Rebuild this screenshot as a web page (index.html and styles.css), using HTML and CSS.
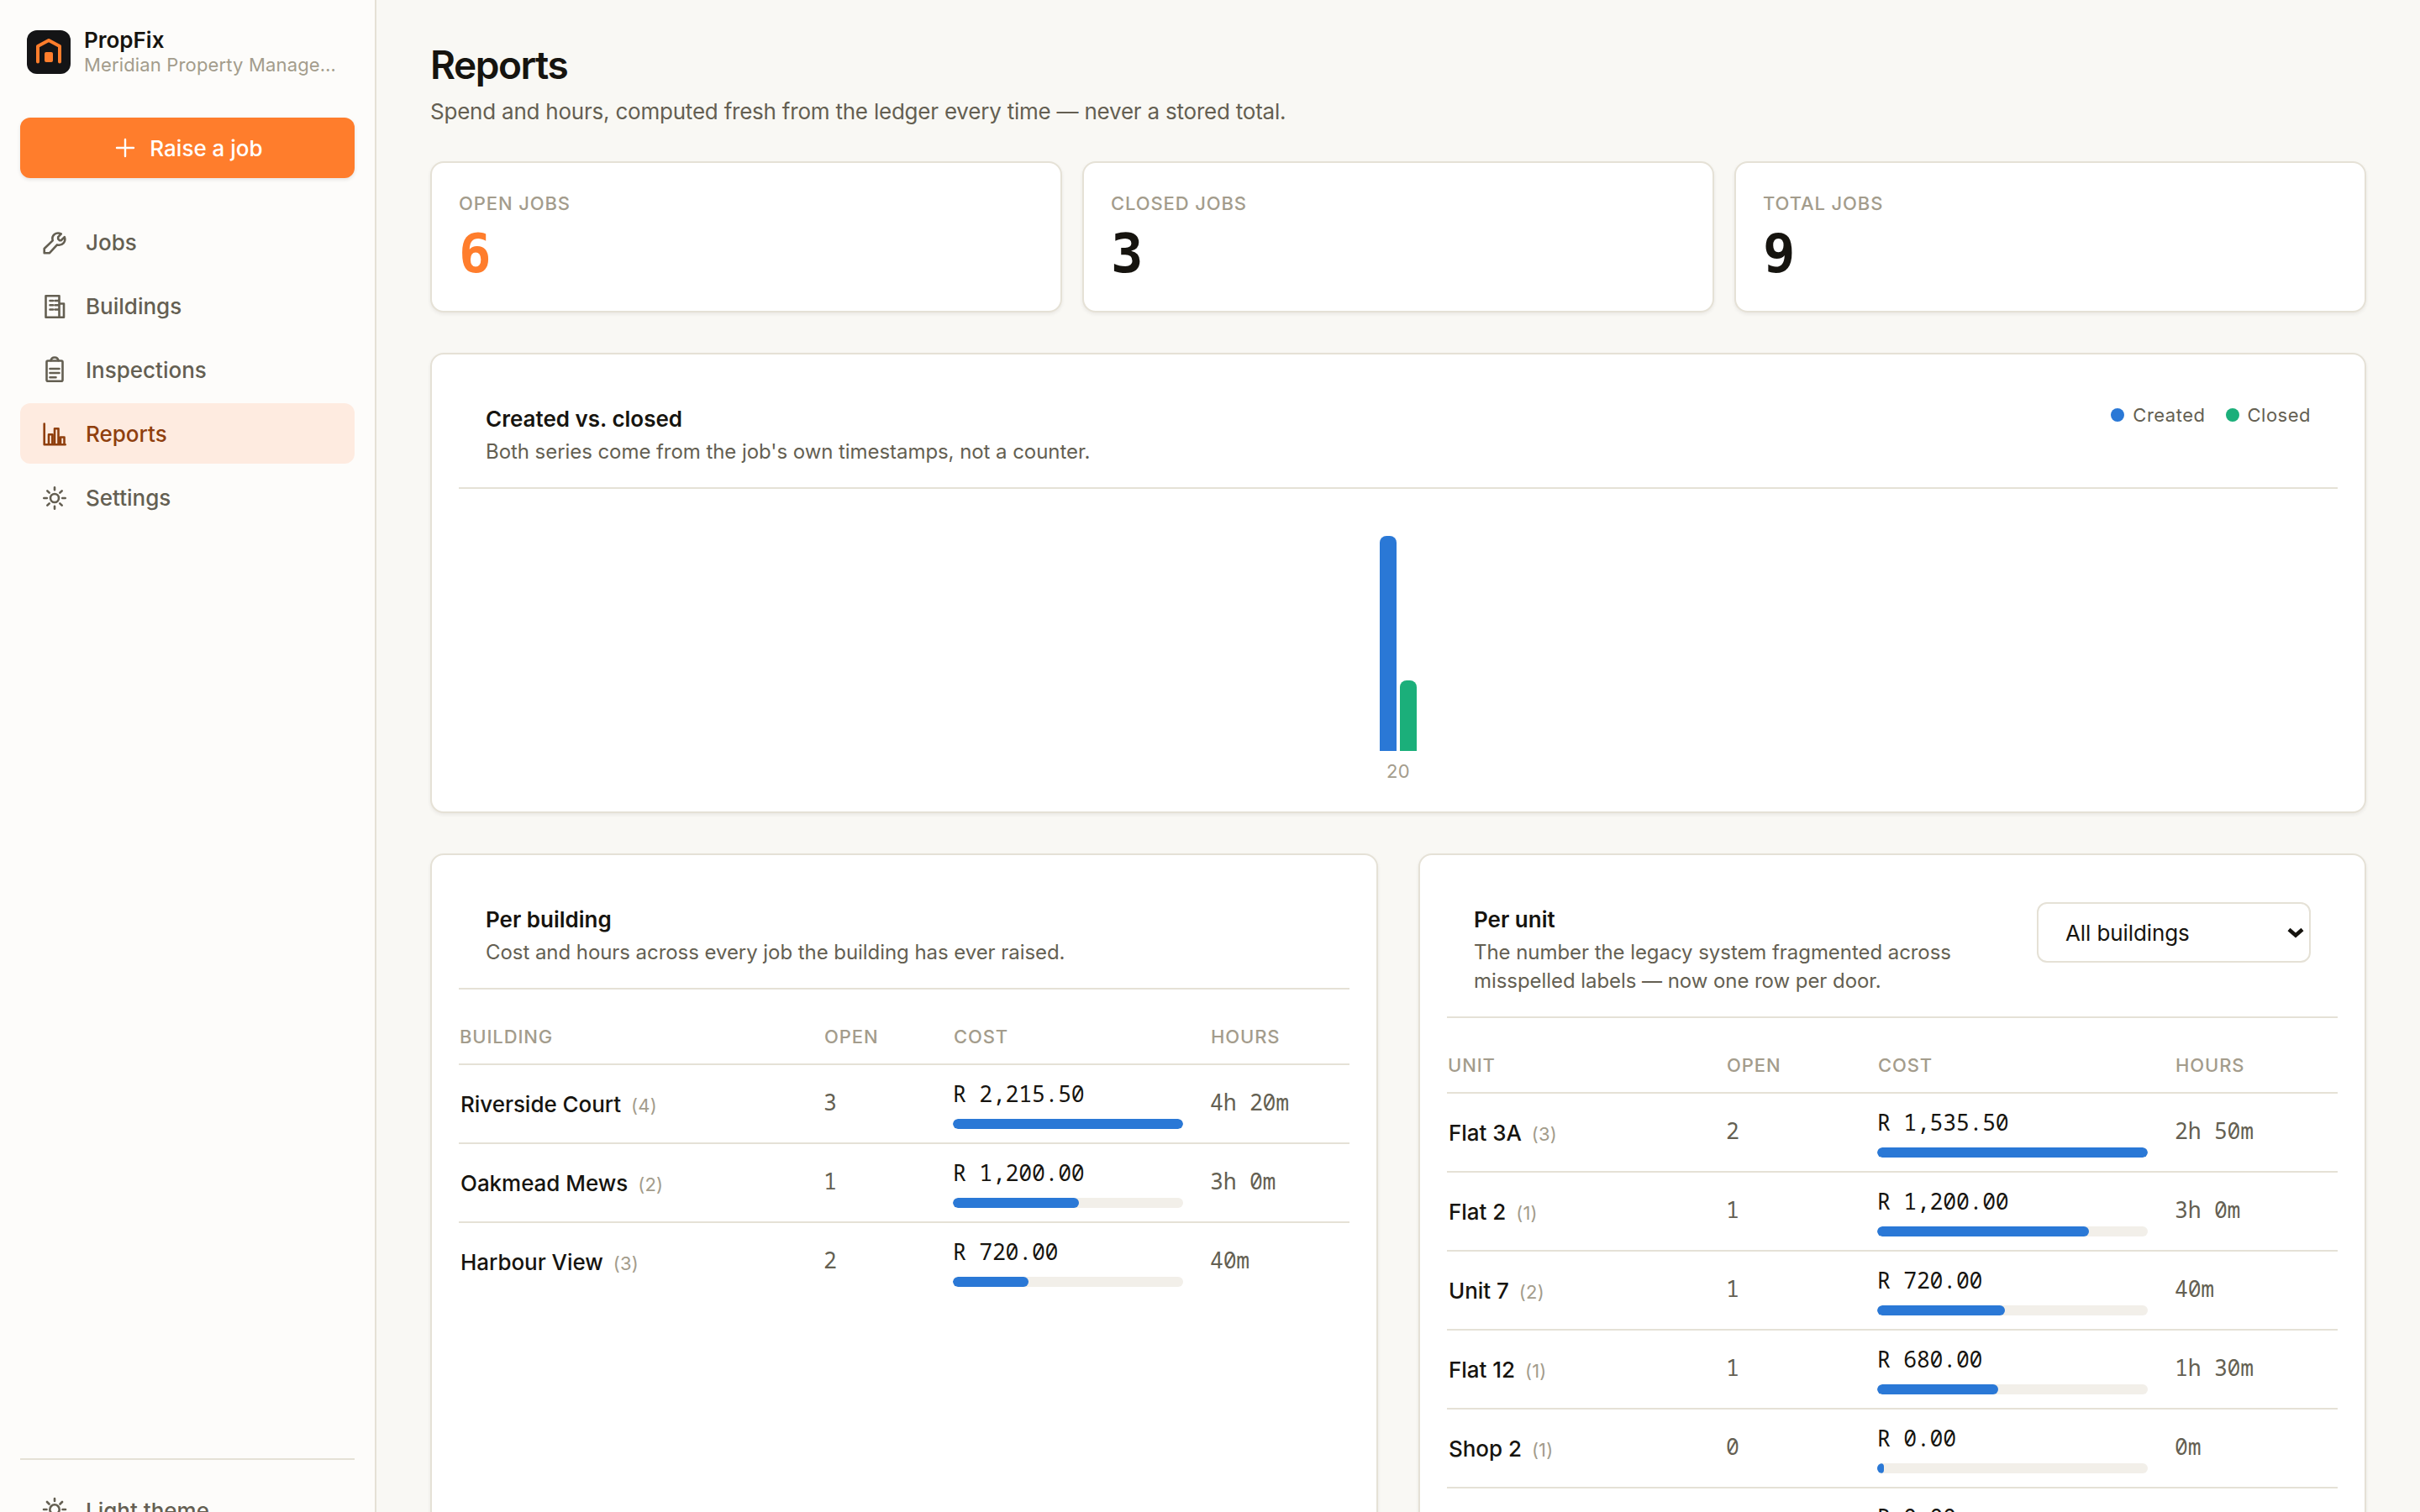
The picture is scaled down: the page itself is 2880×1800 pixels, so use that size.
FILE: index.html
```html
<!DOCTYPE html>
<html lang="en">
<head>
    <meta charset="UTF-8">
    <meta name="viewport" content="width=device-width, initial-scale=1.0">
    <title>PropFix - Reports</title>
    <link rel="stylesheet" href="styles.css">
</head>
<body>
<div class="app">
    <aside class="sidebar">
        <div class="brand">
            <svg class="brand-logo" viewBox="0 0 52 52">
                <rect width="52" height="52" rx="12" fill="#141416"/>
                <path d="M13 37.500V19L26 12l13 7v18.500" fill="none" stroke="#ff7d2c" stroke-width="4" stroke-linecap="round" stroke-linejoin="round"/>
                <rect x="21" y="26" width="10" height="12" rx="2" fill="#ff7d2c"/>
            </svg>
            <div class="brand-text">
                <div class="brand-name">PropFix</div>
                <div class="brand-org">Meridian Property Management</div>
            </div>
        </div>

        <button type="button" class="raise-button">
            <svg class="plus" viewBox="0 0 32 32"><path d="M16 6v20M6 16h20"/></svg>
            <span>Raise a job</span>
        </button>

        <nav class="nav">
            <a class="nav-item">
                <svg class="icon" viewBox="0 0 34 34"><path d="M4.700 30.300V25L14.700 15.400C13 9 18.500 4.800 24.800 7.400L21.200 11.200V13.600L23 15.200H24.600L28.800 11.200C30.800 16.500 26.500 22 20 20.400L10.800 30.300Z"/></svg>
                <span>Jobs</span>
            </a>
            <a class="nav-item">
                <svg class="icon" viewBox="0 0 34 34"><path d="M6.500 5.200H22.500V30.800H6.500ZM22.500 14.500H28V30.800H22.500M11.500 11H15M17.500 11H21M11.500 16.300H15M17.500 16.300H21M11.500 21.500H15M17.500 21.500H21"/></svg>
                <span>Buildings</span>
            </a>
            <a class="nav-item">
                <svg class="icon" viewBox="0 0 34 34"><rect x="7.500" y="6.500" width="19" height="24.300" rx="1.500"/><path d="M12.500 6.300C13 3.600 15 2.500 17 2.500S21 3.600 21.500 6.300M11.500 16H22.500M11.500 21H22.500M11.500 26.300H18.500"/></svg>
                <span>Inspections</span>
            </a>
            <a class="nav-item active">
                <svg class="icon" viewBox="0 0 34 34"><path d="M4.700 5.500V30.300H29.700M10 30V18.300H14.300V30M17 30V11.300H21.500V30M24 30V21.500H28.500V30"/></svg>
                <span>Reports</span>
            </a>
            <a class="nav-item">
                <svg class="icon" viewBox="0 0 34 34"><circle cx="17" cy="18" r="5"/><path d="M17 5.300V8.300M17 27.700V30.700M4.300 18H7.800M26.200 18H29.700M8.300 9.300L10.700 11.700M25.700 9.300L23.300 11.700M8.300 26.700L10.700 24.300M25.700 26.700L23.300 24.300"/></svg>
                <span>Settings</span>
            </a>
        </nav>

        <div class="sidebar-footer">
            <a class="nav-item">
                <svg class="icon" viewBox="0 0 34 34"><circle cx="17" cy="16" r="5.700"/><path d="M17 3V6M17 26V29M4 16H7.500M26.500 16H30M8 7L10.500 9.500M26 7L23.500 9.500M8 25L10.500 22.500M26 25L23.500 22.500"/></svg>
                <span>Light theme</span>
            </a>
        </div>
    </aside>

    <main class="main">
        <h1>Reports</h1>
        <p class="lead">Spend and hours, computed fresh from the ledger every time — never a stored total.</p>

        <section class="stats">
            <div class="card stat">
                <div class="label">Open jobs</div>
                <div class="stat-value accent">6</div>
            </div>
            <div class="card stat">
                <div class="label">Closed jobs</div>
                <div class="stat-value">3</div>
            </div>
            <div class="card stat">
                <div class="label">Total jobs</div>
                <div class="stat-value">9</div>
            </div>
        </section>

        <section class="card">
            <div class="card-header">
                <div>
                    <h2>Created vs. closed</h2>
                    <p class="hint">Both series come from the job's own timestamps, not a counter.</p>
                </div>
                <div class="legend">
                    <span class="legend-item"><i class="dot created"></i>Created</span>
                    <span class="legend-item"><i class="dot closed"></i>Closed</span>
                </div>
            </div>
            <div class="chart">
                <div class="chart-group">
                    <div class="bars">
                        <div class="bar created" style="height: 100%"></div>
                        <div class="bar closed" style="height: 33%"></div>
                    </div>
                    <div class="chart-label">20</div>
                </div>
            </div>
        </section>

        <section class="tables">
            <div class="card">
                <div class="card-header">
                    <div>
                        <h2>Per building</h2>
                        <p class="hint">Cost and hours across every job the building has ever raised.</p>
                    </div>
                </div>
                <table class="building-table">
                    <thead>
                        <tr><th class="col-name">Building</th><th class="col-open">Open</th><th class="col-cost">Cost</th><th>Hours</th></tr>
                    </thead>
                    <tbody>
                        <tr>
                            <td class="name">Riverside Court<span class="count">(4)</span></td>
                            <td class="num">3</td>
                            <td class="cost">R 2,215.50<div class="meter"><div class="meter-fill" style="width: 100%"></div></div></td>
                            <td class="num">4h 20m</td>
                        </tr>
                        <tr>
                            <td class="name">Oakmead Mews<span class="count">(2)</span></td>
                            <td class="num">1</td>
                            <td class="cost">R 1,200.00<div class="meter"><div class="meter-fill" style="width: 54.600%"></div></div></td>
                            <td class="num">3h 0m</td>
                        </tr>
                        <tr>
                            <td class="name">Harbour View<span class="count">(3)</span></td>
                            <td class="num">2</td>
                            <td class="cost">R 720.00<div class="meter"><div class="meter-fill" style="width: 32.700%"></div></div></td>
                            <td class="num">40m</td>
                        </tr>
                    </tbody>
                </table>
            </div>

            <div class="card">
                <div class="card-header">
                    <div>
                        <h2>Per unit</h2>
                        <p class="hint">The number the legacy system fragmented across misspelled labels — now one row per door.</p>
                    </div>
                    <div class="select-wrap">
                        <select>
                            <option>All buildings</option>
                        </select>
                        <svg class="chevron" viewBox="0 0 20 14"><path d="M2 3.500L10 10.500L18 3.500"/></svg>
                    </div>
                </div>
                <table class="unit-table">
                    <thead>
                        <tr><th class="col-name">Unit</th><th class="col-open">Open</th><th class="col-cost">Cost</th><th>Hours</th></tr>
                    </thead>
                    <tbody>
                        <tr>
                            <td class="name">Flat 3A<span class="count">(3)</span></td>
                            <td class="num">2</td>
                            <td class="cost">R 1,535.50<div class="meter"><div class="meter-fill" style="width: 100%"></div></div></td>
                            <td class="num">2h 50m</td>
                        </tr>
                        <tr>
                            <td class="name">Flat 2<span class="count">(1)</span></td>
                            <td class="num">1</td>
                            <td class="cost">R 1,200.00<div class="meter"><div class="meter-fill" style="width: 78.200%"></div></div></td>
                            <td class="num">3h 0m</td>
                        </tr>
                        <tr>
                            <td class="name">Unit 7<span class="count">(2)</span></td>
                            <td class="num">1</td>
                            <td class="cost">R 720.00<div class="meter"><div class="meter-fill" style="width: 47.200%"></div></div></td>
                            <td class="num">40m</td>
                        </tr>
                        <tr>
                            <td class="name">Flat 12<span class="count">(1)</span></td>
                            <td class="num">1</td>
                            <td class="cost">R 680.00<div class="meter"><div class="meter-fill" style="width: 44.700%"></div></div></td>
                            <td class="num">1h 30m</td>
                        </tr>
                        <tr>
                            <td class="name">Shop 2<span class="count">(1)</span></td>
                            <td class="num">0</td>
                            <td class="cost">R 0.00<div class="meter"><div class="meter-fill" style="width: 0%"></div></div></td>
                            <td class="num">0m</td>
                        </tr>
                        <tr>
                            <td class="name">Shop 1<span class="count">(1)</span></td>
                            <td class="num">0</td>
                            <td class="cost">R 0.00<div class="meter"><div class="meter-fill" style="width: 0%"></div></div></td>
                            <td class="num">0m</td>
                        </tr>
                    </tbody>
                </table>
            </div>
        </section>
    </main>
</div>
</body>
</html>
```
FILE: styles.css
```css
* {
    box-sizing: border-box;
}
body {
    margin: 0;
    height: 1800px;
    overflow: hidden;
    font-family: Inter, sans-serif;
    font-size: 26px;
    color: #16140f;
    background: #f9f8f4;
}
h1, h2, p {
    margin: 0;
}
.app {
    display: flex;
    height: 1858px;
}

/* sidebar */
.sidebar {
    display: flex;
    flex-direction: column;
    flex: none;
    width: 448px;
    padding: 33px 24px 24px;
    background: #fdfcfa;
    border-right: 2px solid #e5e1d6;
}
.brand {
    display: flex;
    align-items: center;
    gap: 16px;
    padding: 0 8px;
    margin-bottom: 49px;
}
.brand-logo {
    flex: none;
    width: 52px;
    height: 52px;
}
.brand-text {
    min-width: 0;
}
.brand-name {
    font-weight: 600;
    line-height: 30px;
}
.brand-org {
    font-size: 22px;
    line-height: 28px;
    letter-spacing: 0.15px;
    color: #a39c8c;
    white-space: nowrap;
    overflow: hidden;
    text-overflow: ellipsis;
}
.raise-button {
    display: flex;
    align-items: center;
    justify-content: center;
    gap: 13px;
    height: 72px;
    flex: none;
    margin-bottom: 40px;
    padding: 0;
    border: none;
    border-radius: 12px;
    font: 450 26px Inter, sans-serif;
    color: #fff;
    background: #ff7d2c;
    box-shadow: 0 2px 4px rgba(22, 20, 15, 0.1);
}
.plus {
    width: 32px;
    height: 32px;
    fill: none;
    stroke: currentColor;
    stroke-width: 2.4;
    stroke-linecap: round;
}
.nav {
    display: flex;
    flex-direction: column;
    gap: 4px;
}
.nav-item {
    display: flex;
    align-items: center;
    gap: 20px;
    height: 72px;
    padding: 0 24px;
    border-radius: 12px;
    font-weight: 450;
    color: #645f52;
}
.nav-item span, .raise-button span {
    padding-top: 1px;
}
.nav-item.active {
    color: #8f3f0e;
    background: #feebe0;
}
.icon {
    width: 34px;
    height: 34px;
    fill: none;
    stroke: currentColor;
    stroke-width: 2.6;
    stroke-linecap: round;
    stroke-linejoin: round;
}
.sidebar-footer {
    margin-top: auto;
    padding-top: 24px;
    border-top: 2px solid #e5e1d6;
}

/* page */
.main {
    display: flex;
    flex-direction: column;
    flex: 1;
    padding: 48px 64px 0;
}
h1 {
    font-size: 46px;
    font-weight: 600;
    line-height: 58px;
    letter-spacing: -0.032em;
}
.lead {
    margin: 7px 0 39px;
    line-height: 40px;
    letter-spacing: -0.22px;
    color: #645f52;
}
.card {
    padding: 32px;
    background: #fff;
    border: 2px solid #e5e1d6;
    border-radius: 16px;
    box-shadow: 0 2px 4px rgba(22, 20, 15, 0.07);
}
.stats {
    display: grid;
    grid-template-columns: repeat(3, 1fr);
    gap: 24px;
    margin-bottom: 48px;
}
.label, th {
    font-size: 22px;
    font-weight: 450;
    line-height: 32px;
    letter-spacing: 0.04em;
    text-transform: uppercase;
    color: #a39c8c;
}
.stat-value {
    margin: 10px 0 2px;
    font: 700 64px/68px "DejaVu Sans Mono", monospace;
}
.stat-value.accent {
    color: #ff7d2c;
}
.card-header {
    display: flex;
    justify-content: space-between;
    align-items: flex-start;
    gap: 24px;
    padding: 24px 32px;
    border-bottom: 2px solid #e5e1d6;
}
h2 {
    font-size: 26px;
    font-weight: 600;
    line-height: 42px;
}
.hint {
    padding: 1px 0;
    font-size: 24px;
    line-height: 34px;
    letter-spacing: -0.06px;
    color: #645f52;
}

/* chart */
.created {
    background: #2a78d6;
}
.closed {
    background: #1baf7a;
}
.legend {
    display: flex;
    gap: 24px;
    font-size: 22px;
    line-height: 32px;
    letter-spacing: 0.5px;
    color: #645f52;
}
.legend-item {
    display: flex;
    align-items: center;
    gap: 10px;
}
.dot {
    width: 16px;
    height: 16px;
    border-radius: 50%;
}
.chart {
    display: flex;
    justify-content: center;
    padding-top: 56px;
}
.bars {
    display: flex;
    align-items: flex-end;
    gap: 4px;
    height: 256px;
}
.bar {
    width: 20px;
    border-radius: 8px 8px 0 0;
}
.chart-label {
    margin-top: 8px;
    font-size: 22px;
    line-height: 32px;
    letter-spacing: 0.3px;
    text-align: center;
    color: #a39c8c;
}

/* tables */
.tables {
    display: grid;
    grid-template-columns: 1fr 1fr;
    gap: 48px;
    flex: 1;
    margin-top: 48px;
}
table {
    width: 100%;
    margin-top: 24px;
    table-layout: fixed;
    border-spacing: 0;
}
th {
    padding: 16px 32px 16px 1px;
    text-align: left;
    border-bottom: 2px solid #e5e1d6;
}
.building-table .col-name { width: 434px; }
.building-table .col-open { width: 154px; }
.building-table .col-cost { width: 306px; }
.unit-table .col-name { width: 332px; }
.unit-table .col-open { width: 180px; }
.unit-table .col-cost { width: 354px; }
td {
    padding: 0;
    border-bottom: 2px solid #e5e1d6;
    vertical-align: middle;
    white-space: nowrap;
}
tbody tr:last-child td {
    border-bottom: none;
}
.name {
    padding: 4px 0 3px 2px;
    font-weight: 500;
    letter-spacing: -0.05px;
}
.count {
    margin-left: 12px;
    font-size: 22px;
    font-weight: 400;
    letter-spacing: 0.01em;
    color: #a39c8c;
}
.num, .cost {
    font-family: "Noto Sans Mono", "DejaVu Sans Mono", monospace;
    font-size: 26.5px;
    letter-spacing: -0.25px;
    line-height: 40px;
}
.num {
    padding-bottom: 5px;
    color: #645f52;
}
.cost {
    padding: 14px 32px 16px 0;
}
.meter {
    height: 12px;
    margin-top: 10px;
    border-radius: 6px;
    background: #f2efe9;
    overflow: hidden;
}
.meter-fill {
    min-width: 8px;
    height: 100%;
    border-radius: 6px;
    background: #2a78d6;
}

/* building filter */
.select-wrap {
    position: relative;
    flex: none;
    width: 326px;
    height: 72px;
}
select {
    appearance: none;
    width: 100%;
    height: 100%;
    padding: 0 32px;
    border: 2px solid #e5e1d6;
    border-radius: 12px;
    font: 400 26px Inter, sans-serif;
    letter-spacing: -0.1px;
    color: #16140f;
    background: #fff;
}
.chevron {
    position: absolute;
    top: 29px;
    right: 8px;
    width: 20px;
    height: 14px;
    fill: none;
    stroke: #16140f;
    stroke-width: 4.5;
}
```
